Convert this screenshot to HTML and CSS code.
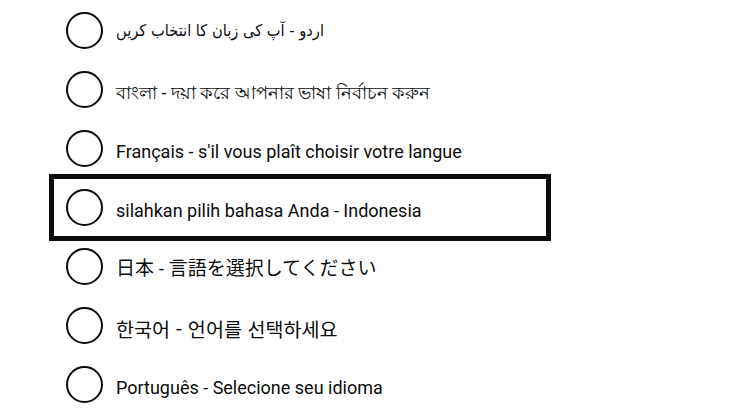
FILE: index.html
```html
<!DOCTYPE html>
<html lang="en">
<head>
<meta charset="utf-8">
<title>Choose language</title>
<link rel="stylesheet" href="styles.css">
</head>
<body>
<div class="radios">
  <label class="radio"><span class="circle"></span><span class="label" lang="ur">اردو - آپ کی زبان کا انتخاب کریں</span></label>
  <label class="radio"><span class="circle"></span><span class="label" lang="bn">বাংলা - দয়া করে আপনার ভাষা নির্বাচন করুন</span></label>
  <label class="radio"><span class="circle"></span><span class="label" lang="fr">Français - s'il vous plaît choisir votre langue</span></label>
  <label class="radio focused"><span class="circle"></span><span class="label" lang="id">silahkan pilih bahasa Anda - Indonesia</span></label>
  <label class="radio"><span class="circle"></span><span class="label" lang="ja">日本 - 言語を選択してください</span></label>
  <label class="radio"><span class="circle"></span><span class="label" lang="ko">한국어 - 언어를 선택하세요</span></label>
  <label class="radio"><span class="circle"></span><span class="label" lang="pt">Português - Selecione seu idioma</span></label>
</div>
</body>
</html>
```
FILE: styles.css
```css
html, body {
  margin: 0;
  padding: 0;
  background: #ffffff;
}
body {
  font-family: Roboto, "DejaVu Sans", "Noto Sans CJK JP", sans-serif;
  color: #0b0c0c;
  width: 751px;
  height: 420px;
  overflow: hidden;
}
.radios {
  display: flex;
  flex-direction: column;
  gap: 2px;
  padding: 2px 0 0 54px;
}
.radio {
  display: flex;
  align-items: center;
  gap: 13px;
  width: 492px;
  height: 57px;
  box-sizing: border-box;
  padding-left: 12px;
}
.focused {
  outline: 5px solid #0b0c0c;
}
.circle {
  flex: none;
  width: 37px;
  height: 37px;
  box-sizing: border-box;
  border: 2px solid #0b0c0c;
  border-radius: 50%;
}
.label {
  font-size: 18px;
  line-height: 25px;
  padding-top: 6px;
}
.label:lang(ur) {
  font-family: "DejaVu Sans Condensed", "DejaVu Sans", sans-serif;
  font-stretch: condensed;
  font-size: 16.3px;
  padding-top: 0;
}
.label:lang(ko) {
  font-family: "Noto Sans CJK KR", sans-serif;
  font-size: 19.6px;
  padding-top: 5px;
}
.label:lang(ja) {
  font-family: Roboto, "Noto Sans CJK JP", sans-serif;
  font-size: 19px;
  padding-top: 4px;
}
```
